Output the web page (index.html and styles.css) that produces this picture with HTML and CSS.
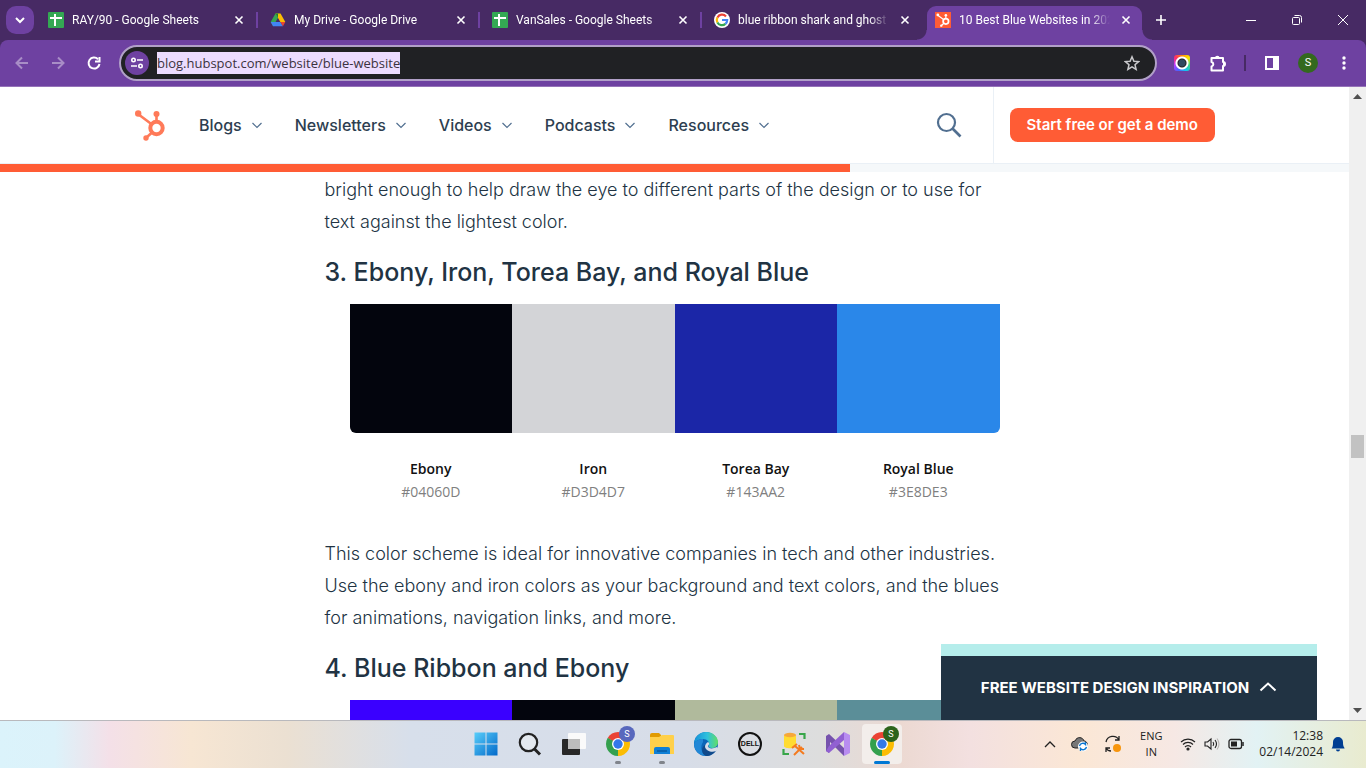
FILE: index.html
```html
<!DOCTYPE html>
<html lang="en">
<head>
    <meta charset="UTF-8">
    <meta name="viewport" content="width=device-width, initial-scale=1.0">
    <title>10 Best Blue Websites in 2024</title>
    <link rel="stylesheet" href="styles.css">
</head>
<body>
    <!-- shared symbols -->
    <svg class="symbols" aria-hidden="true">
        <symbol id="x" viewBox="0 0 16 16"><path d="M4.5 4.5l7 7M11.5 4.5l-7 7" stroke="currentColor" stroke-width="1.6" fill="none"/></symbol>
        <symbol id="down" viewBox="0 0 10 10"><path d="M.5 3L5 7.500 9.500 3" stroke="currentColor" stroke-width="1.200" fill="none"/></symbol>
        <symbol id="sheets" viewBox="0 0 16 16"><rect width="16" height="16" rx="1" fill="#34a853"/><path d="M2 6h12M7 2v12" stroke="#fff" stroke-width="2"/></symbol>
        <symbol id="sprocket" viewBox="0 0 32 32">
            <g stroke="currentColor" fill="none"><circle cx="22.500" cy="19" r="6.200" stroke-width="4"/><path d="M4 5l14 10.500M22.500 6v8M18 23.500l-5.500 5" stroke-width="2.600"/></g>
            <g fill="currentColor"><circle cx="4.200" cy="4.500" r="3.200"/><circle cx="22.500" cy="5" r="3"/><circle cx="12" cy="29" r="2.700"/></g>
        </symbol>
        <symbol id="chrome" viewBox="0 0 24 24">
            <path d="M12 12L1.610 6A12 12 0 0 1 22.390 6z" fill="#ea4335"/>
            <path d="M12 12L22.390 6A12 12 0 0 1 12 24z" fill="#fbbc04"/>
            <path d="M12 12L12 24A12 12 0 0 1 1.610 6z" fill="#34a04e"/>
            <path d="M12 6h10.400L12 8z" fill="#ea4335"/>
            <path d="M17.200 15L12 24l1-8z" fill="#fbbc04"/>
            <path d="M6.800 15L1.610 6 9 10z" fill="#34a04e"/>
            <circle cx="12" cy="12" r="6" fill="#fff"/><circle cx="12" cy="12" r="4.700" fill="#3478ea"/>
        </symbol>
    </svg>

    <header class="browser">
        <div class="tab-bar">
            <button class="tab-search" aria-label="Search tabs"><svg width="12" height="12" viewBox="0 0 12 12"><path d="M2 4l4 4 4-4" stroke="#fff" stroke-width="2" fill="none"/></svg></button>
            <div class="tabs">
                <div class="tab">
                    <svg class="favicon"><use href="#sheets"/></svg>
                    <span class="tab-title">RAY/90 - Google Sheets</span>
                    <button class="close" aria-label="Close tab"><svg><use href="#x"/></svg></button>
                </div>
                <div class="tab">
                    <svg class="favicon" viewBox="0 0 16 16"><path d="M5.500 1.500h5L8 6z" fill="#188038"/><path d="M5.500 1.500L.7 10l2.400 4.300L8 5.800z" fill="#34a853"/><path d="M10.500 1.500l4.800 8.500h-5L5.500 1.500z" fill="#fbbc04"/><path d="M5.500 1.500h2.500L8 6z" fill="#188038"/><path d="M5.600 10H.7l2.400 4.300h9.800L10.400 10z" fill="#4285f4"/><path d="M10.400 10h4.900l-2.400 4.300z" fill="#ea4335"/></svg>
                    <span class="tab-title">My Drive - Google Drive</span>
                    <button class="close" aria-label="Close tab"><svg><use href="#x"/></svg></button>
                </div>
                <div class="tab">
                    <svg class="favicon"><use href="#sheets"/></svg>
                    <span class="tab-title">VanSales - Google Sheets</span>
                    <button class="close" aria-label="Close tab"><svg><use href="#x"/></svg></button>
                </div>
                <div class="tab">
                    <svg class="favicon" viewBox="0 0 16 16"><circle cx="8" cy="8" r="8" fill="#fff"/><g fill="none" stroke-width="2.200"><path d="M12 4.400A5.200 5.200 0 0 0 3.400 5.600" stroke="#ea4335"/><path d="M3.400 5.600a5.200 5.200 0 0 0 0 4.800" stroke="#fbbc04"/><path d="M3.400 10.400a5.200 5.200 0 0 0 8 1.500" stroke="#34a853"/><path d="M11.400 11.900A5.200 5.200 0 0 0 13.200 8H8" stroke="#4285f4"/></g></svg>
                    <span class="tab-title">blue ribbon shark and ghost</span>
                    <button class="close" aria-label="Close tab"><svg><use href="#x"/></svg></button>
                </div>
                <div class="tab active">
                    <svg class="favicon hubspot-icon"><use href="#sprocket"/></svg>
                    <span class="tab-title">10 Best Blue Websites in 2024</span>
                    <button class="close" aria-label="Close tab"><svg><use href="#x"/></svg></button>
                </div>
            </div>
            <button class="new-tab" aria-label="New tab"><svg width="12" height="12" viewBox="0 0 12 12"><path d="M6 1v10M1 6h10" stroke="#fff" stroke-width="1.600"/></svg></button>
            <div class="window-controls">
                <button aria-label="Minimize"><svg width="10" height="10"><path d="M0 5.500h10" stroke="#fff"/></svg></button>
                <button aria-label="Restore"><svg width="12" height="12" fill="none" stroke="#fff"><rect x="1.500" y="3.500" width="7" height="7" rx="1"/><path d="M3.500 1.500h5a2 2 0 0 1 2 2v5"/></svg></button>
                <button aria-label="Close"><svg width="12" height="12"><path d="M1 1l10 10M11 1L1 11" stroke="#fff"/></svg></button>
            </div>
        </div>

        <div class="toolbar">
            <div class="nav-buttons">
                <button class="disabled" aria-label="Back"><svg width="16" height="16" viewBox="0 0 16 16"><path d="M14 8H3M8 2.500L2.500 8 8 13.500"/></svg></button>
                <button class="disabled" aria-label="Forward"><svg width="16" height="16" viewBox="0 0 16 16"><path d="M2 8h11M8 2.500L13.500 8 8 13.500"/></svg></button>
                <button aria-label="Reload"><svg width="16" height="16" viewBox="0 0 16 16"><path d="M13.500 9A5.500 5.500 0 1 1 12 4.200"/><path d="M13.500 2v4.500H9" /></svg></button>
            </div>
            <div class="omnibox">
                <button class="site-info" aria-label="Site information"><svg width="14" height="12" viewBox="0 0 14 12" fill="none" stroke="#fff" stroke-width="1.600"><circle cx="3.500" cy="3" r="1.700"/><path d="M7 3h6M1 9h6"/><circle cx="10.500" cy="9" r="1.700"/></svg></button>
                <input class="url" type="text" aria-label="Address" value="blog.hubspot.com/website/blue-website">
                <button class="bookmark" aria-label="Bookmark this tab"><svg width="16" height="16" viewBox="0 0 16 16"><path d="M8 1.800l1.900 4.400 4.700.4-3.600 3.100 1.100 4.600L8 11.800l-4.100 2.500L5 9.700 1.400 6.600l4.700-.4z" fill="none" stroke="#c9c9cc" stroke-width="1.500"/></svg></button>
            </div>
            <div class="extensions">
                <button aria-label="Colour picker"><span class="picker"></span></button>
                <button aria-label="Extensions"><svg width="18" height="18" viewBox="0 0 18 18"><path d="M2.500 4H14v4a2 2 0 0 1 0 4v4.500H2.500v-4a2.300 2.300 0 0 0 0-4.500z" fill="none" stroke="#fff" stroke-width="2" stroke-linejoin="round"/><path d="M6 4a2.300 2.300 0 0 1 4.600 0zM14 8a2.200 2.200 0 0 1 0 4.400z" fill="#fff"/></svg></button>
                <span class="separator"></span>
                <button aria-label="Side panel"><svg width="16" height="16" viewBox="0 0 16 16"><rect x="2" y="2" width="12" height="12" fill="none" stroke="#fff" stroke-width="2"/><path d="M9 1h6v14H9z" fill="#fff"/></svg></button>
                <button aria-label="Profile"><span class="avatar">S</span></button>
                <button aria-label="Menu"><svg width="4" height="16" fill="#fff"><circle cx="2" cy="3" r="1.700"/><circle cx="2" cy="8" r="1.700"/><circle cx="2" cy="13" r="1.700"/></svg></button>
            </div>
        </div>
    </header>

    <div class="viewport">
        <div class="page">
            <div class="site-header">
                <div class="site-header-inner">
                    <a class="logo" href="#" aria-label="HubSpot"><svg width="32" height="32"><use href="#sprocket"/></svg></a>
                    <nav class="site-nav">
                        <a href="#">Blogs <svg><use href="#down"/></svg></a>
                        <a href="#">Newsletters <svg><use href="#down"/></svg></a>
                        <a href="#">Videos <svg><use href="#down"/></svg></a>
                        <a href="#">Podcasts <svg><use href="#down"/></svg></a>
                        <a href="#">Resources <svg><use href="#down"/></svg></a>
                    </nav>
                    <button class="search" aria-label="Search"><svg width="26" height="26" viewBox="0 0 26 26" fill="none" stroke="#516f90" stroke-width="2.200"><circle cx="10.500" cy="10.500" r="8.500"/><path d="M16.500 16.500L24.500 24.500" stroke-width="2.600"/></svg></button>
                    <div class="cta-wrap"><a class="cta" href="#">Start free or get a demo</a></div>
                </div>
            </div>
            <div class="progress"><div class="progress-bar" style="width: 63%"></div></div>

            <main class="article">
                <p>bright enough to help draw the eye to different parts of the design or to use for<br>text against the lightest color.</p>

                <h3>3. Ebony, Iron, Torea Bay, and Royal Blue</h3>
                <div class="palette">
                    <div class="color"><div class="swatch ebony"></div><b>Ebony</b><span>#04060D</span></div>
                    <div class="color"><div class="swatch iron"></div><b>Iron</b><span>#D3D4D7</span></div>
                    <div class="color"><div class="swatch torea-bay"></div><b>Torea Bay</b><span>#143AA2</span></div>
                    <div class="color"><div class="swatch royal-blue"></div><b>Royal Blue</b><span>#3E8DE3</span></div>
                </div>
                <p>This color scheme is ideal for innovative companies in tech and other industries.<br>Use the ebony and iron colors as your background and text colors, and the blues<br>for animations, navigation links, and more.</p>

                <h3>4. Blue Ribbon and Ebony</h3>
                <div class="palette">
                    <div class="color"><div class="swatch blue-ribbon"></div></div>
                    <div class="color"><div class="swatch ebony"></div></div>
                    <div class="color"><div class="swatch sage"></div></div>
                    <div class="color"><div class="swatch teal"></div></div>
                </div>
            </main>

            <button class="slide-in">Free Website Design Inspiration <svg width="18" height="12" viewBox="0 0 18 12"><path d="M1.500 9.500L9 2.500l7.500 7" stroke="#fff" stroke-width="2" fill="none"/></svg></button>
        </div>
        <div class="scrollbar">
            <svg width="9" height="5"><path d="M0 5L4.500 0 9 5z" fill="#505050"/></svg>
            <div class="thumb"></div>
            <svg width="9" height="5"><path d="M0 0h9L4.500 5z" fill="#505050"/></svg>
        </div>
    </div>

    <footer class="taskbar">
        <div class="apps">
            <button aria-label="Start"><svg width="24" height="24" viewBox="0 0 24 24"><defs><linearGradient id="win" x1="0" y1="0" x2="24" y2="24" gradientUnits="userSpaceOnUse"><stop stop-color="#5ad0fb"/><stop offset="1" stop-color="#0067c9"/></linearGradient></defs><path d="M.5.5h11v11H.5zM12.500.5h11v11h-11zM.5 12.500h11v11H.5zM12.500 12.500h11v11h-11z" fill="url(#win)"/></svg></button>
            <button aria-label="Search"><svg width="24" height="24" viewBox="0 0 24 24" fill="none" stroke="#222"><circle cx="10.500" cy="10.500" r="8.700" stroke-width="2.200" fill="#e4e9ef"/><path d="M16.500 17l5.500 5.500" stroke-width="3"/></svg></button>
            <button aria-label="Task view"><svg width="26" height="24" viewBox="0 0 26 24"><rect x="1" y="7" width="18" height="16" rx="1" fill="#282828"/><rect x="7" y="1" width="18" height="16" rx="1" fill="#fafafa"/><path d="M7 7h12v10H7z" fill="#bcbcbc"/></svg></button>
            <button class="running" aria-label="Chrome"><svg width="24" height="24"><use href="#chrome"/></svg><span class="badge">S</span></button>
            <button class="running" aria-label="File Explorer"><svg width="24" height="24" viewBox="0 0 24 24"><path d="M0 3q0-2 2-2h7l2 2v3H0z" fill="#e19b00"/><path d="M0 5h9l3-2h11q1 0 1 1v18H0z" fill="#ffd04a"/><path d="M4 22v-5q0-2 2-2h12q2 0 2 2v5z" fill="#0f7fd6"/><path d="M7 19h10" stroke="#075aa2" stroke-width="1.500"/></svg></button>
            <button aria-label="Edge"><svg width="24" height="24" viewBox="0 0 24 24"><defs><linearGradient id="edge"><stop stop-color="#1690d8"/><stop offset=".55" stop-color="#2fc0dd"/><stop offset="1" stop-color="#62df65"/></linearGradient></defs><circle cx="12" cy="12" r="12" fill="#0c66b8"/><path d="M0 11C1 4 6 0 12 0c7 0 12 5 12 10 0 4-3 6-6 6-3 0-4-1-3-3 1-3-2-6-6-6-4 0-7 2-9 4z" fill="url(#edge)"/><path d="M9 7c-4 0-8 2-9 5 0 7 6 12 12 12C7 21 6 14 9 10z" fill="#2187d6"/><path d="M11 13c0 5 5 8 11 5-2 4-6 6-10 6-5-2-5-9-1-11z" fill="#114a8b"/><path d="M14 10c2 1 1 3 0 4 0 3 5 3 9 1l1 2-2 2c-4 2-10 0-11-4 0-2 1-4 3-5z" fill="#d7dde8"/></svg></button>
            <button aria-label="Dell"><span class="dell">DELL</span></button>
            <button aria-label="Database tools"><svg width="24" height="24" viewBox="0 0 24 24"><path d="M2 3v11c0 3 12 3 12 0V3z" fill="#ffdc32"/><ellipse cx="8" cy="3" rx="6" ry="2.200" fill="#f6a83b"/><path d="M17 2h5.500v5M1.500 17v5H7" fill="none" stroke="#38a64a" stroke-width="2.200"/><path d="M12 23l8-8M13 14l9 8M10 16l5-4M17 13l1 4 4 0" fill="none" stroke="#f47b20" stroke-width="2"/></svg></button>
            <button aria-label="Visual Studio"><svg width="24" height="24" viewBox="0 0 24 24"><path d="M0 4l3-2 15 14v8L4 10v6l-1 5-3-2z" fill="#7652ad"/><path d="M18 0L3 14l-3 5 3 2L18 8z" fill="#9160d2"/><path d="M18 0l6 3v18l-6 3z" fill="#b88cf0"/></svg></button>
            <button class="running current" aria-label="Chrome"><svg width="24" height="24"><use href="#chrome"/></svg><span class="badge green">S</span></button>
        </div>
        <div class="tray">
            <svg width="12" height="8" viewBox="0 0 12 8"><path d="M1 7l5-5 5 5" fill="none" stroke="#222" stroke-width="1.300"/></svg>
            <svg width="18" height="16" viewBox="0 0 18 16"><path d="M4 12a3.500 3.500 0 0 1 0-7C6 0 12 1 13 5c4 0 5 7 0 7z" fill="#777" stroke="#222"/><circle cx="12" cy="10.500" r="5" fill="#fff"/><path d="M8.500 10a3.500 3.500 0 0 1 6-1.500V6M15.500 11a3.500 3.500 0 0 1-6 1.500V15" stroke="#0875d1" stroke-width="1.400" fill="none"/></svg>
            <svg width="18" height="18" viewBox="0 0 18 18"><path d="M2 7a7 7 0 0 1 13-2M15 1v4h-4M2 17v-4h4M2 13c1 2 3 3 5 3" fill="none" stroke="#222" stroke-width="1.300"/><circle cx="13" cy="13" r="4" fill="#f7950d"/></svg>
            <div class="language">ENG<br>IN</div>
            <div class="status">
                <svg width="16" height="14" viewBox="0 0 16 14" fill="none" stroke="#222" stroke-width="1.200"><path d="M1 5a10 10 0 0 1 14 0M3 7.500a7 7 0 0 1 10 0M5 10a4 4 0 0 1 6 0"/><circle cx="8" cy="12" r="1" fill="#222"/></svg>
                <svg width="16" height="14" viewBox="0 0 16 14" fill="none" stroke="#222" stroke-width="1.100"><path d="M1 5h2.500L7 2v10L3.500 9H1zM9 5q1.500 2 0 4M11 3q3 4 0 8"/><path d="M13 1.500q4 5.500 0 11" stroke="#b9b5b2"/></svg>
                <svg width="16" height="12" viewBox="0 0 16 12"><rect x="1" y="1.500" width="12.500" height="9" rx="2" fill="none" stroke="#222" stroke-width="1.300"/><path d="M3 3.500h6v5H3z" fill="#222"/><path d="M15 4v4" stroke="#222" stroke-width="1.500"/></svg>
            </div>
            <div class="clock">12:38<br>02/14/2024</div>
            <svg width="14" height="16" viewBox="0 0 14 16" fill="#003e92"><path d="M1 12c1-2 1-4 1-6a5 5 0 0 1 10 0c0 2 0 4 1.500 6v.500H.500zM5 13.500h4a2 2 0 0 1-4 0z"/></svg>
        </div>
    </footer>
</body>
</html>
```
FILE: styles.css
```css
* {
    box-sizing: border-box;
}
body {
    margin: 0;
    height: 100vh;
    display: flex;
    flex-direction: column;
    overflow: hidden;
    font-family: "Open Sans", sans-serif;
    font-size: 12px;
}
button {
    display: flex;
    align-items: center;
    justify-content: center;
    padding: 0;
    border: 0;
    background: none;
    font: inherit;
    color: inherit;
}
a {
    color: inherit;
    text-decoration: none;
}
svg {
    flex: none;
}
.symbols {
    position: absolute;
    width: 0;
    height: 0;
}

/* browser window */
.browser {
    background: #472a64;
    color: #fff;
}
.tab-bar {
    display: flex;
    align-items: center;
    height: 40px;
}
.tab-search {
    width: 28px;
    height: 28px;
    margin: 0 2px 0 6px;
    border-radius: 10px;
    background: #6e41a1;
}
.tabs {
    display: flex;
    flex: 0 1 1109px;
    align-self: stretch;
    min-width: 0;
    font-family: Roboto, sans-serif;
}
.tab {
    position: relative;
    display: flex;
    flex: 1;
    align-items: center;
    gap: 8px;
    min-width: 0;
    padding: 0 11px 0 12px;
}
.tab:not(.active)::after {
    content: "";
    position: absolute;
    right: 0;
    top: 12px;
    width: 2px;
    height: 16px;
    background: #6e41a1;
}
.tab:nth-child(4)::after {
    display: none;
}
.tab.active {
    margin: 6px 3px 0;
    padding: 0 8px 6px;
    border-radius: 9px 9px 0 0;
    background: #6e41a1;
}
/* the curved feet of the selected tab */
.tab.active::before,
.tab.active::after {
    content: "";
    position: absolute;
    top: auto;
    right: auto;
    bottom: 0;
    width: 10px;
    height: 10px;
}
.tab.active::before {
    right: 100%;
    background: radial-gradient(circle at 0 0, transparent 9px, #6e41a1 10px);
}
.tab.active::after {
    left: 100%;
    background: radial-gradient(circle at 100% 0, transparent 9px, #6e41a1 10px);
}
.favicon {
    width: 16px;
    height: 16px;
}
.hubspot-icon {
    padding: 1px;
    background: #ff5c35;
    color: #fff;
}
.tab-title {
    flex: 1;
    overflow: hidden;
    white-space: nowrap;
    mask-image: linear-gradient(to right, #000 calc(100% - 20px), transparent);
}
.close,
.close svg {
    width: 16px;
    height: 16px;
}
.new-tab {
    width: 28px;
    height: 28px;
    margin-left: 2px;
}
.window-controls {
    display: flex;
    align-self: stretch;
    margin-left: auto;
}
.window-controls button {
    width: 46px;
}
.toolbar {
    display: flex;
    align-items: center;
    height: 47px;
    border-bottom: 1px solid #9573b8;
    border-radius: 8px 8px 0 0;
    background: #6e41a1;
}
.nav-buttons {
    display: flex;
    padding: 0 7px 0 4px;
}
.nav-buttons button {
    width: 36px;
    height: 36px;
}
.nav-buttons svg {
    fill: none;
    stroke: #fff;
    stroke-width: 2;
}
.nav-buttons .disabled {
    opacity: 0.4;
}
.omnibox {
    display: flex;
    flex: 1;
    align-items: center;
    height: 36px;
    padding: 0 15px 0 4px;
    border: 2px solid #b1a0c8;
    border-radius: 18px;
    background: #202124;
}
.site-info {
    width: 24px;
    height: 24px;
    border-radius: 50%;
    background: #6e41a1;
}
.url {
    field-sizing: content;
    height: 22px;
    margin: 0 auto 0 8px;
    padding: 0;
    border: 0;
    background: #ecdcff;
    color: #3c3340;
    font: 13px "Open Sans", sans-serif;
}
.extensions {
    display: flex;
    align-items: center;
    padding: 0 4px 0 7px;
}
.extensions button {
    width: 36px;
    height: 36px;
}
.separator {
    width: 2px;
    height: 16px;
    margin: 0 8px;
    background: #472a64;
}
.picker {
    width: 16px;
    height: 16px;
    border-radius: 3px;
    background: radial-gradient(circle, #304a60 3px, #222 4px, #fff 5px, #fff 6px, transparent 7px), conic-gradient(#ff8a00, #ffe600, #3ddc84, #13c4f2, #4a62ff, #c13cff, #ff2d6f, #ff8a00);
}
.avatar {
    width: 20px;
    border-radius: 50%;
    background: #33691e;
    font: 11px/20px Roboto, sans-serif;
}

/* web page */
.viewport {
    display: flex;
    flex: 1;
    min-height: 0;
}
.page {
    position: relative;
    flex: 1;
    overflow: hidden;
    background: #fff;
    color: #213343;
    font-family: Inter, sans-serif;
}
.site-header {
    border-bottom: 1px solid #eaf0f6;
}
.site-header-inner {
    display: flex;
    align-items: center;
    max-width: 1081px;
    height: 76px;
    margin: 0 auto;
}
.logo {
    display: flex;
    margin-right: 33px;
    color: #ff7a59;
}
.site-nav {
    display: flex;
    gap: 33px;
    margin-right: auto;
    font-size: 16px;
    font-weight: 500;
}
.site-nav a {
    display: flex;
    align-items: center;
    gap: 10px;
    color: #2d3e50;
}
.site-nav svg {
    width: 10px;
    height: 10px;
    color: #516f90;
}
.search {
    margin-right: 31px;
}
.cta-wrap {
    display: flex;
    align-items: center;
    align-self: stretch;
    padding-left: 16px;
    border-left: 1px solid #eaf0f6;
}
.cta {
    padding: 0 17px;
    border-radius: 8px;
    background: #ff5c35;
    color: #fff;
    font-size: 15px;
    font-weight: 600;
    line-height: 34px;
    text-align: center;
}
.progress {
    height: 8px;
    background: #f5f8fa;
}
.progress-bar {
    height: 100%;
    background: #ff5c35;
}
.article {
    max-width: 700px;
    margin: 0 auto;
    padding-top: 2px;
}
.article p {
    margin: 0;
    font-size: 18px;
    font-weight: 300;
    line-height: 32px;
    white-space: nowrap;
}
.article h3 {
    margin: 18px 0 16px;
    font-size: 25px;
    font-weight: 500;
    line-height: 32px;
}
.palette {
    display: grid;
    grid-template-columns: repeat(4, 1fr);
    max-width: 650px;
    margin: 0 auto 35px;
    font-family: "Open Sans", sans-serif;
    font-size: 14px;
    line-height: 23px;
    text-align: center;
}
.color {
    display: flex;
    flex-direction: column;
}
.color b {
    color: #111;
    font-weight: 600;
}
.color span {
    color: #808080;
}
.swatch {
    height: 129px;
    margin-bottom: 24px;
}
.color:first-child .swatch {
    border-bottom-left-radius: 6px;
}
.color:last-child .swatch {
    border-bottom-right-radius: 6px;
}
.ebony {
    background: #03050d;
}
.iron {
    background: #d3d4d7;
}
.torea-bay {
    background: #1b26a7;
}
.royal-blue {
    background: #2a87e9;
}
.blue-ribbon {
    background: #3a00ff;
}
.sage {
    background: #b0ba9c;
}
.teal {
    background: #5b8e98;
}
.slide-in {
    position: absolute;
    right: 32px;
    bottom: 0;
    gap: 10px;
    width: 376px;
    height: 76px;
    padding-bottom: 2px;
    border-top: 12px solid #b5edeb;
    background: #213343;
    color: #fff;
    font-size: 15px;
    font-weight: 700;
    text-transform: uppercase;
}
.scrollbar {
    position: relative;
    display: flex;
    flex-direction: column;
    align-items: center;
    justify-content: space-between;
    width: 17px;
    padding: 7px 0;
    background: #f0f0f0;
}
.thumb {
    position: absolute;
    top: 55%;
    left: 2px;
    right: 2px;
    height: 23px;
    background: #c2c2c2;
}

/* taskbar */
.taskbar {
    display: grid;
    grid-template-columns: 1fr auto 1fr;
    align-items: center;
    height: 48px;
    padding-bottom: 2px;
    border-top: 1px solid #b9b9bd;
    background: linear-gradient(to right, #dbf3fb, #dcf2fa 4%, #f4e0e8 8%, #f7e6d3 14%, #ebe0d2 21%, #d7dfeb 30%, #d7dde8 50%, #dddddd 60%, #ecd9d2 66%, #f3e0e0 71%, #fbe7d5 79%, #f6e8e4 86%, #e2f2f4 92%, #e9ebcf);
    color: #222;
}
.apps {
    display: flex;
    grid-column: 2;
    gap: 4px;
    padding-left: 2px;
}
.apps button {
    position: relative;
    width: 40px;
    height: 40px;
}
.running::after {
    content: "";
    position: absolute;
    left: 17px;
    bottom: 0;
    width: 6px;
    height: 3px;
    border-radius: 2px;
    background: #80848b;
}
.apps .current {
    border-radius: 4px;
    background: #f3eeeb;
}
.current::after {
    left: 12px;
    width: 16px;
    background: #0078d4;
}
.badge {
    position: absolute;
    top: 2px;
    right: 3px;
    width: 16px;
    border-radius: 50%;
    background: #5868bd;
    color: #fff;
    font: 9px/16px Roboto, sans-serif;
}
.badge.green {
    background: #2c641b;
}
.dell {
    width: 24px;
    border: 2px solid #111;
    border-radius: 50%;
    color: #111;
    font: bold 7px/20px "Liberation Sans", sans-serif;
}
.tray {
    display: flex;
    align-items: center;
    justify-content: flex-end;
    gap: 15px;
    padding-right: 21px;
    line-height: 16px;
}
.language {
    width: 28px;
    font-size: 11px;
    text-align: center;
}
.status {
    display: flex;
    align-items: center;
    gap: 8px;
}
.clock {
    font-size: 12px;
    text-align: right;
}
.tray > svg:last-child {
    margin-left: -7px;
}
```
